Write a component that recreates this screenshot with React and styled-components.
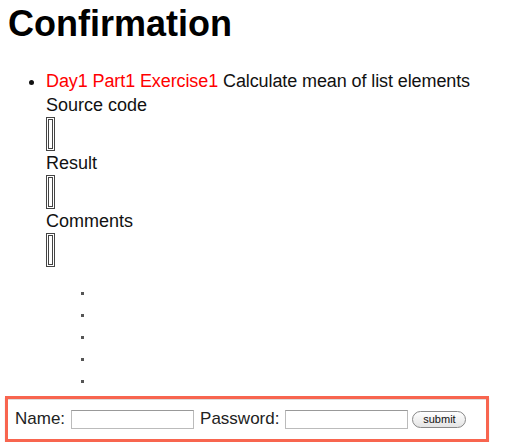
import React from 'react'
import styled, { createGlobalStyle } from 'styled-components'

const GlobalStyle = createGlobalStyle`
  body {
    margin: 0;
    padding: 3px 8px 0;
    background: #fff;
    color: #111;
    font-family: "Liberation Sans", Arial, sans-serif;
  }
`

const Title = styled.h1`
  margin: 0 0 25px;
  font-size: 36px;
  font-weight: bold;
  line-height: 41px;
  color: #000;
`

const List = styled.ul`
  margin: 0;
  padding-left: 38px;
  font-size: 18px;
  line-height: 22px;
`

const Item = styled.li`
  list-style: disc;
`

const Heading = styled.div`
  line-height: 24px;
  margin-bottom: 1px;
  letter-spacing: -0.1px;
`

const Exercise = styled.span`
  color: #ff0000;
`

const Label = styled.div`
  line-height: 22px;
`

const Box = styled.textarea`
  display: block;
  box-sizing: border-box;
  width: 9px;
  height: 34px;
  margin: 1px 0 1px;
  padding: 0;
  border: 3px double #444;
  resize: none;
  background: #fff;
`

const Dots = styled.ul`
  margin: 16px 0 0;
  padding-left: 48px;
`

const Dot = styled.li`
  list-style: square;
  height: 22px;
  color: #555;
  font-size: 10px;
`

const Footer = styled.form`
  display: flex;
  align-items: center;
  gap: 6px;
  margin: 3px 0 0 -3px;
  width: 484px;
  height: 46px;
  box-sizing: border-box;
  padding: 0 7px;
  border: 3px solid #f8654f;
  box-shadow: inset 0 1px 0 #ddd, 0 2px 1px #ccc;
  font-size: 17px;
  color: #222;
`

const Field = styled.input`
  width: 123px;
  height: 19px;
  box-sizing: border-box;
  border: 1px solid #bbb;
  border-top-color: #999;
  margin: 0;
`

const Submit = styled.button`
  height: 17px;
  width: 54px;
  padding: 0;
  border: 1px solid #888;
  border-radius: 9px;
  background: linear-gradient(#fff, #e4e4e4);
  font-family: "Liberation Sans", Arial, sans-serif;
  font-size: 11px;
  color: #111;
  margin-left: -2px;
`

export default function App() {
  return (
    <>
      <GlobalStyle />
      <Title>Confirmation</Title>
      <List>
        <Item>
          <Heading>
            <Exercise>Day1 Part1 Exercise1</Exercise> Calculate mean of list elements
          </Heading>
          <Label>Source code</Label>
          <Box readOnly />
          <Label>Result</Label>
          <Box readOnly />
          <Label>Comments</Label>
          <Box readOnly />
          <Dots>
            {[0, 1, 2, 3, 4].map((i) => (
              <Dot key={i} />
            ))}
          </Dots>
        </Item>
      </List>
      <Footer onSubmit={(e) => e.preventDefault()}>
        <span>Name:</span>
        <Field type="text" />
        <span>Password:</span>
        <Field type="password" />
        <Submit type="submit">submit</Submit>
      </Footer>
    </>
  )
}
